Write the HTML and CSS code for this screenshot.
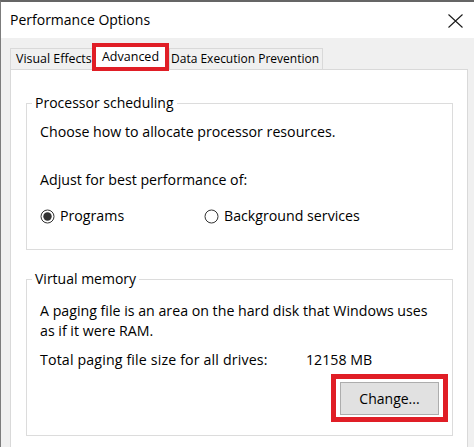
FILE: index.html
```html
<!DOCTYPE html>
<html>
<head>
<meta charset="utf-8">
<title>Performance Options</title>
<link rel="stylesheet" href="styles.css">
</head>
<body>
<div class="window">
  <div class="titlebar">
    <span class="title">Performance Options</span>
    <svg class="close" width="15" height="14" viewBox="0 0 15 14">
      <path d="M0.5 0.5 L14.5 13.5 M14.5 0.5 L0.5 13.5" stroke="#1a1a1a" stroke-width="1.1" fill="none"/>
    </svg>
  </div>
  <div class="tabstrip">
    <div class="tab tab-visual">Visual Effects</div>
    <div class="tab tab-active">Advanced</div>
    <div class="tab tab-dep">Data Execution Prevention</div>
  </div>
  <div class="panel">
    <fieldset class="group group-cpu">
      <legend>Processor scheduling</legend>
      <p class="line">Choose how to allocate processor resources.</p>
      <p class="line adjust">Adjust for best performance of:</p>
      <div class="radios">
        <label class="radio radio-first">
          <svg width="15" height="15" viewBox="0 0 15 15"><circle cx="7.5" cy="7.5" r="6.5" fill="#fff" stroke="#333" stroke-width="1"/><circle cx="7.5" cy="7.5" r="4.2" fill="#333"/></svg>
          <span>Programs</span>
        </label>
        <label class="radio">
          <svg width="15" height="15" viewBox="0 0 15 15"><circle cx="7.5" cy="7.5" r="6.5" fill="#fff" stroke="#333" stroke-width="1"/></svg>
          <span>Background services</span>
        </label>
      </div>
    </fieldset>
    <fieldset class="group group-vm">
      <legend>Virtual memory</legend>
      <p class="line">A paging file is an area on the hard disk that Windows uses<br>as if it were RAM.</p>
      <div class="total">
        <span class="total-label">Total paging file size for all drives:</span>
        <span class="total-value">12158 MB</span>
      </div>
      <div class="actions">
        <div class="highlight">
          <button class="btn">Change...</button>
        </div>
      </div>
    </fieldset>
  </div>
</div>
</body>
</html>
```

FILE: styles.css
```css
html, body {
  margin: 0;
  padding: 0;
}
body {
  width: 474px;
  height: 447px;
  overflow: hidden;
  background: #f0f0f0;
  font-family: "Open Sans", "Noto Sans", "Liberation Sans", sans-serif;
  color: #000;
}
.window {
  height: 445px;
  border-top: 2px solid #656565;
  border-left: 1px solid #7c7c7c;
  background: #f0f0f0;
  overflow: hidden;
}
.titlebar {
  height: 36px;
  background: #fff;
  display: flex;
  align-items: center;
  justify-content: space-between;
  padding: 0 11px 0 9px;
}
.title {
  font-size: 14px;
  line-height: 20px;
}
.close {
  display: block;
  margin-top: 1px;
}
.tabstrip {
  display: flex;
  align-items: flex-end;
  height: 31px;
  box-sizing: border-box;
  padding: 5px 0 0 9px;
}
.tab {
  box-sizing: border-box;
  font-size: 12px;
  line-height: 20px;
  white-space: nowrap;
  background: #f0f0f0;
}
.tab-visual,
.tab-dep {
  height: 21px;
  border: 1px solid #d9d9d9;
  border-bottom: none;
}
.tab-visual {
  width: 82px;
  padding-left: 5px;
  border-right: none;
  font-size: 12.4px;
}
.tab-dep {
  width: 154px;
  padding-left: 1px;
}
.tab-active {
  position: relative;
  z-index: 1;
  width: 77px;
  height: 28px;
  margin-bottom: -2px;
  border: 4px solid #e01e26;
  background: #fff;
  text-align: center;
  line-height: 19px;
  font-size: 12.5px;
}
.panel {
  margin-left: 9px;
  width: 458px;
  height: 400px;
  box-sizing: border-box;
  border: 1px solid #d9d9d9;
  background: #fff;
  padding: 23px 14px 0 15px;
}
.group {
  margin: 0;
  min-inline-size: 0;
  border: 1px solid #dcdcdc;
  padding: 9px 4px 23px 13px;
}
.group legend {
  font-size: 14px;
  line-height: 20px;
  padding: 0 3px;
  margin-left: -8px;
}
.line {
  margin: 0;
  font-size: 14.2px;
  line-height: 20px;
}
.adjust {
  margin-top: 28px;
}
.radios {
  display: flex;
  margin-top: 16px;
  font-size: 14.2px;
  line-height: 20px;
}
.radio {
  display: flex;
  align-items: center;
  gap: 5px;
}
.radio svg {
  display: block;
}
.radio-first {
  width: 164px;
}
.group-vm {
  margin-top: 19px;
  padding-top: 12px;
  padding-bottom: 13px;
}
.total {
  display: flex;
  margin-top: 9px;
  font-size: 14.2px;
  line-height: 20px;
}
.total-label {
  width: 266px;
  letter-spacing: 0.15px;
}
.actions {
  display: flex;
  justify-content: flex-end;
  margin-top: 4px;
}
.highlight {
  border: 5px solid #e01e26;
  padding: 3px 4px 2px 4px;
  background: #fff;
}
.btn {
  display: block;
  width: 99px;
  height: 33px;
  margin: 0;
  padding: 0;
  border: 1px solid #adadad;
  background: #e1e1e1;
  font-family: inherit;
  font-size: 14px;
  color: #000;
}
```
